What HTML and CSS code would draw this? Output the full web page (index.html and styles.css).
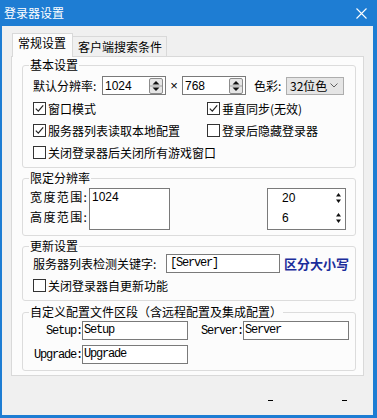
FILE: index.html
```html
<!DOCTYPE html>
<html lang="zh-CN">
<head>
<meta charset="utf-8">
<title>登录器设置</title>
<link rel="stylesheet" href="styles.css">
</head>
<body>
<div class="window">
  <div class="titlebar">
    <span class="title">登录器设置</span>
    <svg class="close" width="11" height="11" viewBox="0 0 11 11"><path d="M0.5 0.5L10.5 10.5M10.5 0.5L0.5 10.5" stroke="#fff" stroke-width="1.1" fill="none"/></svg>
  </div>
  <div class="client">
    <div class="tabs">
      <div class="tab tab-active">常规设置</div>
      <div class="tab tab-idle">客户端搜索条件</div>
    </div>
    <div class="panel">
      <fieldset class="group g1">
        <legend>基本设置</legend>
        <div class="res">
          <span class="lbl-res">默认分辨率:</span>
          <div class="spinbox"><span>1024</span><svg width="14" height="16" viewBox="0 0 14 16"><rect x="0.5" y="0.5" width="13" height="15" rx="1.5" fill="#e6e6e6" stroke="#8c8c8c"/><line x1="1" y1="8" x2="13" y2="8" stroke="#a0a0a0"/><path d="M3.5 6.5h7L7 3z" fill="#111"/><path d="M3.5 9.5h7L7 13z" fill="#111"/></svg></div>
          <span class="times">×</span>
          <div class="spinbox"><span>768</span><svg width="14" height="16" viewBox="0 0 14 16"><rect x="0.5" y="0.5" width="13" height="15" rx="1.5" fill="#e6e6e6" stroke="#8c8c8c"/><line x1="1" y1="8" x2="13" y2="8" stroke="#a0a0a0"/><path d="M3.5 6.5h7L7 3z" fill="#111"/><path d="M3.5 9.5h7L7 13z" fill="#111"/></svg></div>
          <span class="lbl-color">色彩:</span>
          <div class="select"><span>32位色</span><svg width="8" height="5" viewBox="0 0 8 5"><polyline points="0.5,0.5 4,4 7.5,0.5" fill="none" stroke="#606060"/></svg></div>
        </div>
        <div class="checks">
          <label class="check"><span class="box"><svg width="11" height="11" viewBox="0 0 11 11"><polyline points="1.8,5.6 4.3,8.2 9.2,2.4" fill="none" stroke="#222" stroke-width="1.2"/></svg></span>窗口模式</label>
          <label class="check"><span class="box"><svg width="11" height="11" viewBox="0 0 11 11"><polyline points="1.8,5.6 4.3,8.2 9.2,2.4" fill="none" stroke="#222" stroke-width="1.2"/></svg></span>垂直同步(无效)</label>
          <label class="check"><span class="box"><svg width="11" height="11" viewBox="0 0 11 11"><polyline points="1.8,5.6 4.3,8.2 9.2,2.4" fill="none" stroke="#222" stroke-width="1.2"/></svg></span>服务器列表读取本地配置</label>
          <label class="check"><span class="box"></span>登录后隐藏登录器</label>
          <label class="check span2"><span class="box"></span>关闭登录器后关闭所有游戏窗口</label>
        </div>
      </fieldset>

      <fieldset class="group g2">
        <legend>限定分辨率</legend>
        <div class="limits">
          <div class="lim-labels">
            <span class="lim-l1">宽度范围:</span>
            <span class="lim-l2">高度范围:</span>
          </div>
          <div class="lim-box"><span class="lim-val">1024</span></div>
          <div class="lim-spin">
            <div class="lim-row"><span>20</span><svg width="7" height="14" viewBox="0 0 7 14"><path d="M1 5.5h5L3.5 2z" fill="#111"/><path d="M1 8.5h5L3.5 12z" fill="#111"/></svg></div>
            <div class="lim-row"><span>6</span><svg width="7" height="14" viewBox="0 0 7 14"><path d="M1 5.5h5L3.5 2z" fill="#111"/><path d="M1 8.5h5L3.5 12z" fill="#111"/></svg></div>
          </div>
        </div>
      </fieldset>

      <fieldset class="group g3">
        <legend>更新设置</legend>
        <div class="kw">
          <span class="lbl-kw">服务器列表检测关键字:</span>
          <div class="edit mono kw-edit">[Server]</div>
          <span class="case">区分大小写</span>
        </div>
        <label class="check upd"><span class="box"></span>关闭登录器自更新功能</label>
      </fieldset>

      <fieldset class="group g4">
        <legend>自定义配置文件区段（含远程配置及集成配置）</legend>
        <div class="cfg">
          <span class="mono cfg-lbl">Setup:</span>
          <div class="edit mono cfg-edit">Setup</div>
          <span class="mono cfg-lbl2">Server:</span>
          <div class="edit mono cfg-edit">Server</div>
        </div>
        <div class="cfg cfg2">
          <span class="mono cfg-lbl">Upgrade:</span>
          <div class="edit mono cfg-edit">Upgrade</div>
        </div>
      </fieldset>
    </div>
    <div class="footer"><span class="dash"></span><span class="dash"></span></div>
  </div>
</div>
</body>
</html>
```
FILE: styles.css
```css
html, body {
  margin: 0;
  padding: 0;
}
body {
  width: 377px;
  height: 418px;
  overflow: hidden;
  font-family: "Noto Sans CJK SC", "Noto Sans", sans-serif;
  font-size: 12px;
  color: #000;
}
.window {
  box-sizing: border-box;
  width: 377px;
  height: 418px;
  background: #1e7dd3;
  padding: 0 4px 3px 2px;
  display: flex;
  flex-direction: column;
}
.titlebar {
  height: 26px;
  flex-shrink: 0;
  margin: 0 -4px 0 -2px;
  padding-left: 4px;
  display: flex;
  align-items: center;
  justify-content: space-between;
  color: #fff;
  font-size: 12px;
  line-height: 14px;
}
.close {
  margin-right: 10px;
}
.client {
  flex: 1;
  background: #f0f0f0;
}
.tabs {
  display: flex;
  align-items: flex-end;
  height: 30px;
  box-sizing: border-box;
  padding-left: 10px;
}
.tab {
  box-sizing: border-box;
  border: 1px solid #d9d9d9;
  border-bottom: 0;
  line-height: 16px;
  white-space: nowrap;
}
.tab-active {
  height: 24px;
  margin-bottom: -1px;
  padding: 1px 6px 0 5px;
  background: #fcfcfc;
  position: relative;
  z-index: 1;
}
.tab-idle {
  height: 20px;
  border-left: 0;
  padding: 2px 4px 0 5px;
  background: #f0f0f0;
}
.panel {
  box-sizing: border-box;
  width: 353px;
  height: 320px;
  margin-left: 9px;
  border: 1px solid #d9d9d9;
  background: #fcfcfc;
  padding: 1px 0 0 10px;
}
.group {
  box-sizing: border-box;
  width: 334px;
  margin: 0;
  min-width: 0;
  border: 1px solid #dcdcdc;
  border-radius: 3px;
  padding: 0 9px 4px 10px;
}
.group legend {
  margin-left: -4px;
  padding: 0 1px;
  line-height: 14px;
  font-size: 12px;
}
.g2 { margin-top: 3px; padding-bottom: 5px; }
.g3 { margin-top: 3px; padding-bottom: 4px; }
.g4 { margin-top: 4px; padding-bottom: 6px; }

/* resolution row */
.res {
  display: flex;
  align-items: center;
  height: 19px;
  margin-top: 4px;
  white-space: nowrap;
}
.lbl-res { width: 69px; flex-shrink: 0; }
.spinbox {
  box-sizing: border-box;
  width: 64px;
  height: 19px;
  flex-shrink: 0;
  border: 1px solid #7a7a7a;
  background: #fff;
  display: flex;
  align-items: center;
  justify-content: space-between;
  padding: 0 2px 0 2px;
  font-family: "Liberation Sans", Arial, sans-serif;
  font-size: 12px;
}
.spinbox svg { display: block; }
.times {
  width: 16px;
  text-align: center;
  font-family: "Liberation Sans", sans-serif;
  font-size: 13px;
  flex-shrink: 0;
}
.lbl-color { margin-left: 8px; width: 32px; flex-shrink: 0; }
.select {
  box-sizing: border-box;
  width: 58px;
  height: 18px;
  flex-shrink: 0;
  border: 1px solid #adadad;
  background: #e5e5e5;
  display: flex;
  align-items: center;
  justify-content: space-between;
  padding: 0 5px 0 3px;
}
.select svg { display: block; }

/* checkboxes */
.checks {
  display: grid;
  grid-template-columns: 174px 1fr;
  grid-auto-rows: 22px;
  margin-top: 2px;
}
.check {
  display: flex;
  align-items: center;
  white-space: nowrap;
  height: 22px;
}
.span2 { grid-column: 1 / 3; }
.box {
  box-sizing: border-box;
  width: 13px;
  height: 13px;
  border: 1px solid #333;
  background: #fff;
  margin-right: 2px;
  flex-shrink: 0;
  display: flex;
  align-items: center;
  justify-content: center;
}
.box svg { display: block; }

/* limits */
.limits {
  display: flex;
  margin-top: 3px;
}
.lim-labels {
  width: 59px;
  margin-left: -3px;
  flex-shrink: 0;
  display: flex;
  flex-direction: column;
  letter-spacing: 1.4px;
  white-space: nowrap;
  overflow: hidden;
}
.lim-l1 { line-height: 18px; }
.lim-l2 { line-height: 22px; }
.lim-box {
  box-sizing: border-box;
  width: 81px;
  height: 42px;
  flex-shrink: 0;
  border: 1px solid #7a7a7a;
  background: #fff;
  padding: 0 0 0 2px;
  font-family: "Liberation Sans", Arial, sans-serif;
  line-height: 16px;
}
.lim-spin {
  box-sizing: border-box;
  margin-left: auto;
  width: 79px;
  height: 42px;
  border: 1px solid #7a7a7a;
  background: #fff;
  padding: 1px 3px 0 14px;
  font-family: "Liberation Sans", Arial, sans-serif;
  display: flex;
  flex-direction: column;
  gap: 5px;
}
.lim-row {
  display: flex;
  align-items: center;
  justify-content: space-between;
  height: 15px;
}
.lim-row svg { display: block; }

/* update */
.kw {
  display: flex;
  align-items: center;
  height: 19px;
  margin-top: 1px;
  white-space: nowrap;
}
.lbl-kw { width: 133px; flex-shrink: 0; }
.edit {
  box-sizing: border-box;
  height: 19px;
  flex-shrink: 0;
  border: 1px solid #7a7a7a;
  background: #fff;
  line-height: 17px;
}
.mono {
  font-family: "Liberation Mono", "Courier New", monospace;
  font-size: 12px;
  letter-spacing: -1.2px;
}
.kw-edit { width: 114px; padding-left: 3px; }
.case {
  margin-left: 4px;
  font-weight: bold;
  font-size: 13px;
  color: #1b2d9b;
}
.upd { margin-top: 1px; }

/* config */
.cfg {
  display: flex;
  align-items: center;
  height: 19px;
  margin-top: 2px;
  white-space: nowrap;
}
.cfg2 { margin-top: 5px; }
.cfg-lbl { width: 49px; text-align: right; flex-shrink: 0; }
.cfg-lbl2 { width: 55px; text-align: right; flex-shrink: 0; }
.cfg-edit { width: 106px; padding-left: 1px; }

/* footer */
.footer {
  display: flex;
  margin-top: 24px;
  padding-left: 266px;
  gap: 69px;
}
.dash {
  width: 5px;
  height: 1px;
  background: #000;
}
```
